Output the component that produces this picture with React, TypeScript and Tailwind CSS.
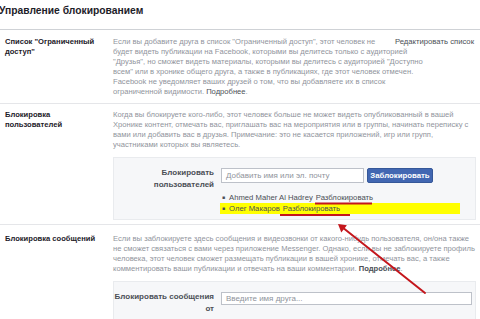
import React from 'react';

const Section: React.FC<{ label: React.ReactNode; last?: boolean; className?: string; children: React.ReactNode }> = ({
  label,
  last,
  className,
  children,
}) => (
  <div className={`flex ${last ? '' : 'border-b border-[#e5e6e9]'} ${className ?? ''}`}>
    <div className="w-[113px] shrink-0 pl-[5px] text-[7.6px] font-bold leading-[10px] text-[#1d2129]">{label}</div>
    <div className="min-w-0 flex-1">{children}</div>
  </div>
);

const App: React.FC = () => {
  return (
    <div className="relative h-[319px] w-[480px] overflow-hidden bg-white font-['Liberation_Sans',Arial,sans-serif]">
      {/* Header */}
      <div className="h-[30px] border-b border-[#cfd2d6] pt-[4px]">
        <h1 className="-ml-[1px] text-[10.3px] font-bold leading-[14px] text-[#1d2129]">Управление блокированием</h1>
      </div>

      {/* Restricted list */}
      <Section label={<>Список "Ограниченный<br />доступ"</>} className="pt-[7px] pb-[6px]">
        <a className="float-right pr-[6px] text-[7.7px] leading-[10px] text-[#4b4f56]">Редактировать список</a>
        <div className="whitespace-nowrap text-[7.6px] leading-[10px] text-[#90949c]">
          Если вы добавите друга в список "Ограниченный доступ", этот человек не
          <br />
          будет видеть публикации на Facebook, которыми вы делитесь только с аудиторией
          <br />
          "Друзья", но сможет видеть материалы, которыми вы делитесь с аудиторией "Доступно
          <br />
          всем" или в хронике общего друга, а также в публикациях, где этот человек отмечен.
          <br />
          Facebook не уведомляет ваших друзей о том, что вы добавляете их в список
          <br />
          ограниченной видимости. <span className="text-[#4b4f56]">Подробнее</span>.
        </div>
      </Section>

      {/* Block users */}
      <Section label={<>Блокировка<br />пользователей</>} className="pt-[6px] pb-[4px]">
        <div className="whitespace-nowrap text-[7.6px] leading-[10px] text-[#90949c]">
          Когда вы блокируете кого-либо, этот человек больше не может видеть опубликованный в вашей
          <br />
          Хронике контент, отмечать вас, приглашать вас на мероприятия или в группы, начинать переписку с
          <br />
          вами или добавить вас в друзья. Примечание: это не касается приложений, игр или групп,
          <br />
          участниками которых вы являетесь.
        </div>
        <div className="mt-[7px] mr-[4px] border border-[#e9ebee] bg-[#f6f7f9] pt-[9px] pb-[5px]">
          <div className="flex items-start">
            <div className="w-[100px] shrink-0 whitespace-nowrap text-right text-[8px] font-bold leading-[12px] text-[#4b4f56]">
              Блокировать
              <br />
              пользователей
            </div>
            <div className="ml-[7px] mt-[1px] flex h-[15px] w-[143px] items-center border border-[#bdc1c9] bg-white pl-[4px] text-[8px] text-[#90949c]">
              Добавить имя или эл. почту
            </div>
            <button className="ml-[3px] mt-[1px] h-[15px] w-[66px] rounded-[2px] border border-[#365899] bg-[#4267b2] text-[7.8px] font-bold leading-[13px] text-white">
              Заблокировать
            </button>
          </div>
          <ul className="ml-[106px] mt-[1px] text-[7.7px] leading-[11px] text-[#4b4f56]">
            <li className="flex items-center">
              <span className="mx-[2px] text-[5px]">■</span>
              <span className="ml-[2px]">Ahmed Maher Al Hadrey</span>
              <span className="ml-[3px]">Разблокировать</span>
            </li>
            <li className="flex w-[240px] items-center bg-[#ffff00]">
              <span className="mx-[2px] text-[5px]">■</span>
              <span className="ml-[2px]">Олег Макаров</span>
              <span className="ml-[3px]">Разблокировать</span>
            </li>
          </ul>
        </div>
      </Section>

      {/* Block messages */}
      <Section label="Блокировка сообщений" last className="pt-[9px]">
        <div className="whitespace-nowrap text-[7.6px] leading-[10px] text-[#90949c]">
          Если вы заблокируете здесь сообщения и видеозвонки от какого-нибудь пользователя, он/она также
          <br />
          не сможет связаться с вами через приложение Messenger. Однако, если вы не заблокируете профиль
          <br />
          человека, этот человек сможет размещать публикации в вашей хронике, отмечать вас, а также
          <br />
          комментировать ваши публикации и отвечать на ваши комментарии. <span className="font-bold text-[#4b4f56]">Подробнее</span>.
        </div>
        <div className="mt-[7px] mr-[4px] h-[60px] border border-[#e9ebee] bg-[#f6f7f9] pt-[9px]">
          <div className="flex items-start">
            <div className="w-[100px] shrink-0 whitespace-nowrap text-right text-[8px] font-bold leading-[12px] text-[#4b4f56]">
              Блокировать сообщения
              <br />
              от
            </div>
            <div className="ml-[7px] mt-[1px] flex h-[13px] w-[251px] items-center border border-[#bdc1c9] bg-white pl-[4px] text-[8px] text-[#90949c]">
              Введите имя друга...
            </div>
          </div>
        </div>
      </Section>

      {/* Annotation overlay */}
      <svg className="pointer-events-none absolute left-0 top-0" width="480" height="319" viewBox="0 0 480 319">
        <line x1="315" y1="203.5" x2="372" y2="203.5" stroke="#c4161c" strokeWidth="1.8" />
        <line x1="280" y1="215" x2="350" y2="215" stroke="#c4161c" strokeWidth="1.8" />
        <line x1="425" y1="293" x2="342" y2="227" stroke="#c4161c" strokeWidth="2" strokeLinecap="round" />
        <polygon points="338,224 341.3,232.4 346.9,225.3" fill="#c4161c" />
      </svg>
    </div>
  );
};

export default App;
